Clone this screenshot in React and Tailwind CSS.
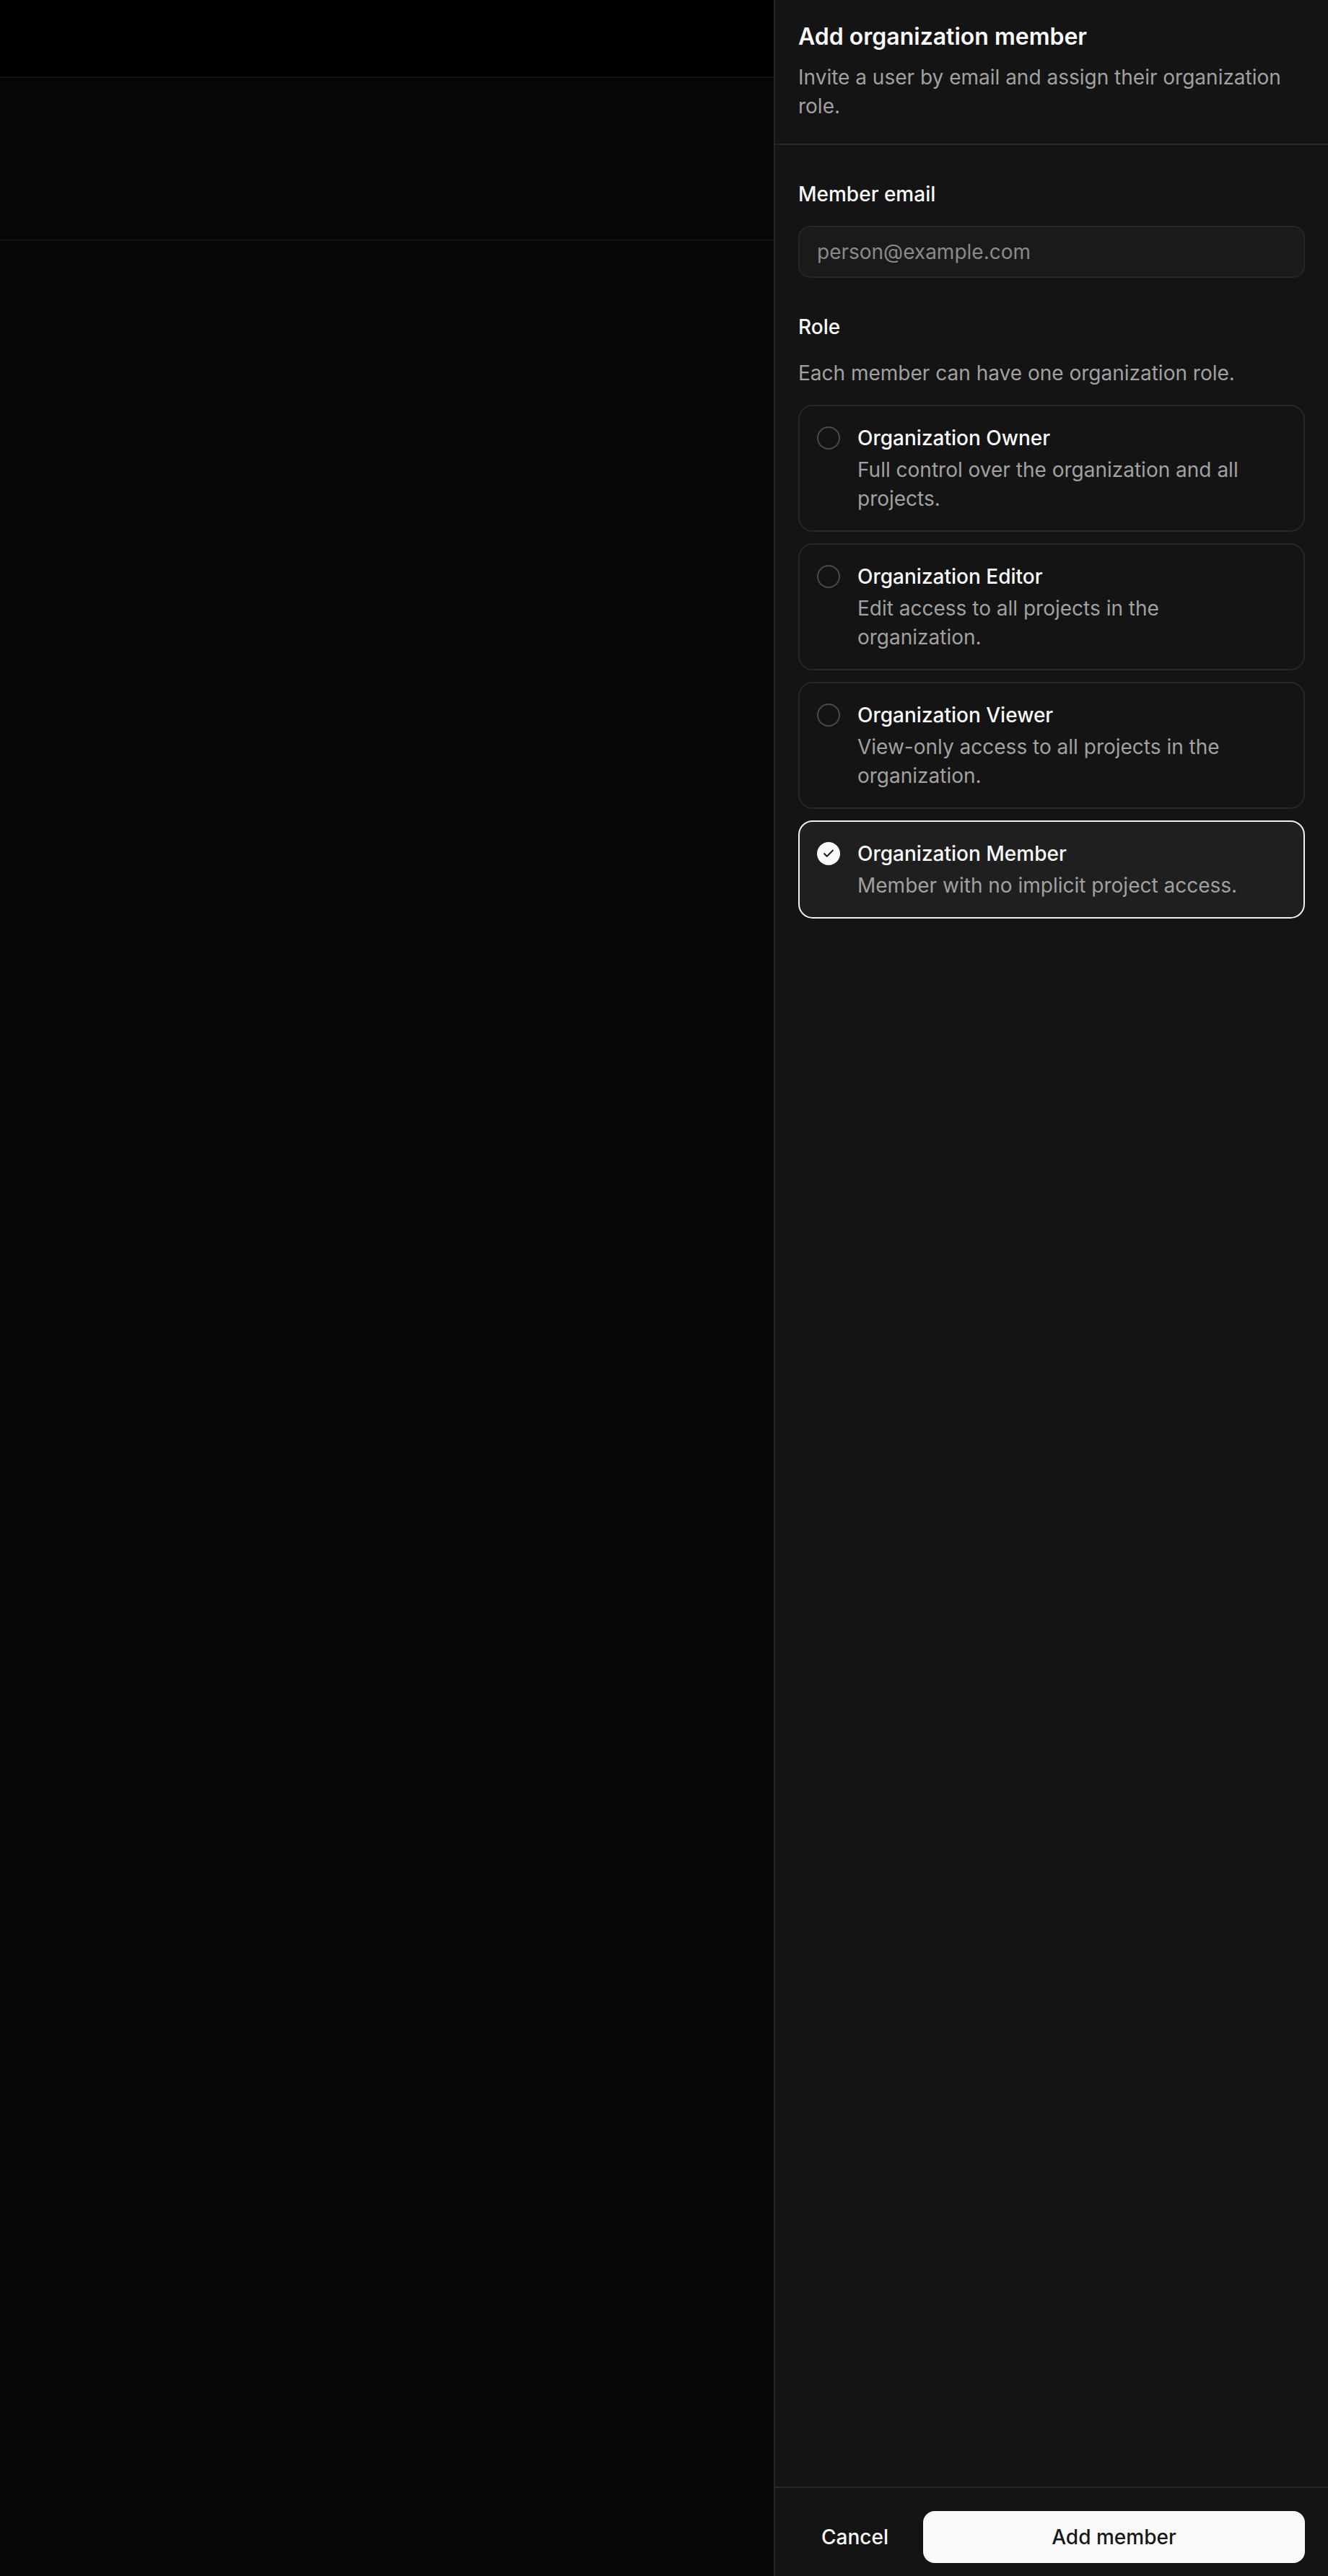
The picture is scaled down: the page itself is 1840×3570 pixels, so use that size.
import { Check } from "lucide-react";

const roles = [
  {
    id: "owner",
    title: "Organization Owner",
    description: "Full control over the organization and all projects.",
  },
  {
    id: "editor",
    title: "Organization Editor",
    description: "Edit access to all projects in the organization.",
  },
  {
    id: "viewer",
    title: "Organization Viewer",
    description: "View-only access to all projects in the organization.",
  },
  {
    id: "member",
    title: "Organization Member",
    description: "Member with no implicit project access.",
  },
];

const RoleOption = ({ role, selected }) => {
  return (
    <label
      className={
        selected
          ? "flex items-start gap-6 rounded-[20px] border-2 border-[#f0f0f0] bg-[#1f1f1f] p-6"
          : "flex items-start gap-6 rounded-[20px] border-2 border-[#262626] p-6"
      }
    >
      {selected ? (
        <span className="mt-1 flex size-8 shrink-0 items-center justify-center rounded-full bg-[#fafafa]">
          <Check className="size-[18px] text-[#171717]" strokeWidth={2.5} />
        </span>
      ) : (
        <span className="mt-1 size-8 shrink-0 rounded-full border-2 border-[#4a4a4a]" />
      )}
      <div className="flex flex-col gap-1">
        <span className="text-[28px] font-medium leading-[40px] text-[#fafafa]">
          {role.title}
        </span>
        <span className="text-[28px] leading-[40px] text-[#a1a1a1]">
          {role.description}
        </span>
      </div>
    </label>
  );
};

export default function App() {
  const selectedRole = "member";

  return (
    <div className="flex h-[3570px] w-[1840px] overflow-hidden bg-[#060606] font-['Inter',sans-serif]">
      {/* page behind the sheet */}
      <div className="flex w-[1072px] flex-col">
        <div className="h-[108px] border-b-2 border-[#121212] bg-black" />
        <div className="h-[226px] border-b-2 border-[#121212]" />
        <div className="flex-1" />
      </div>

      {/* sheet */}
      <aside className="flex w-[768px] flex-col border-l-2 border-[#262626] bg-[#141414]">
        <div className="flex flex-col gap-3 border-b-2 border-[#262626] px-8 pb-8 pt-[27px]">
          <h2 className="text-[32px] font-semibold leading-[48px] text-[#fafafa]">
            Add organization member
          </h2>
          <p className="text-[28px] leading-[40px] text-[#a1a1a1]">
            Invite a user by email and assign their organization role.
          </p>
        </div>

        <form className="flex flex-1 flex-col gap-12 px-8 py-12">
          <div className="flex flex-col gap-6">
            <label className="text-[28px] font-medium leading-[40px] text-[#fafafa]">
              Member email
            </label>
            <input
              type="email"
              placeholder="person@example.com"
              className="h-[72px] rounded-[16px] border-2 border-[#262626] bg-[#1a1a1a] px-6 text-[28px] text-[#fafafa] placeholder:text-[#8a8a8a] focus:outline-none"
            />
          </div>

          <div className="flex flex-col gap-6">
            <span className="text-[28px] font-medium leading-[40px] text-[#fafafa]">
              Role
            </span>
            <p className="text-[28px] leading-[40px] text-[#a1a1a1]">
              Each member can have one organization role.
            </p>
            <div className="grid gap-4">
              {roles.map((role) => (
                <RoleOption
                  key={role.id}
                  role={role}
                  selected={role.id === selectedRole}
                />
              ))}
            </div>
          </div>
        </form>

        <div className="flex gap-4 border-t-2 border-[#262626] px-8 pb-[18px] pt-8">
          <button
            type="button"
            className="h-[72px] rounded-[16px] px-8 text-[28px] font-medium text-[#fafafa]"
          >
            Cancel
          </button>
          <button
            type="button"
            className="h-[72px] flex-1 rounded-[16px] bg-[#fafafa] text-[28px] font-medium text-[#171717]"
          >
            Add member
          </button>
        </div>
      </aside>
    </div>
  );
}
